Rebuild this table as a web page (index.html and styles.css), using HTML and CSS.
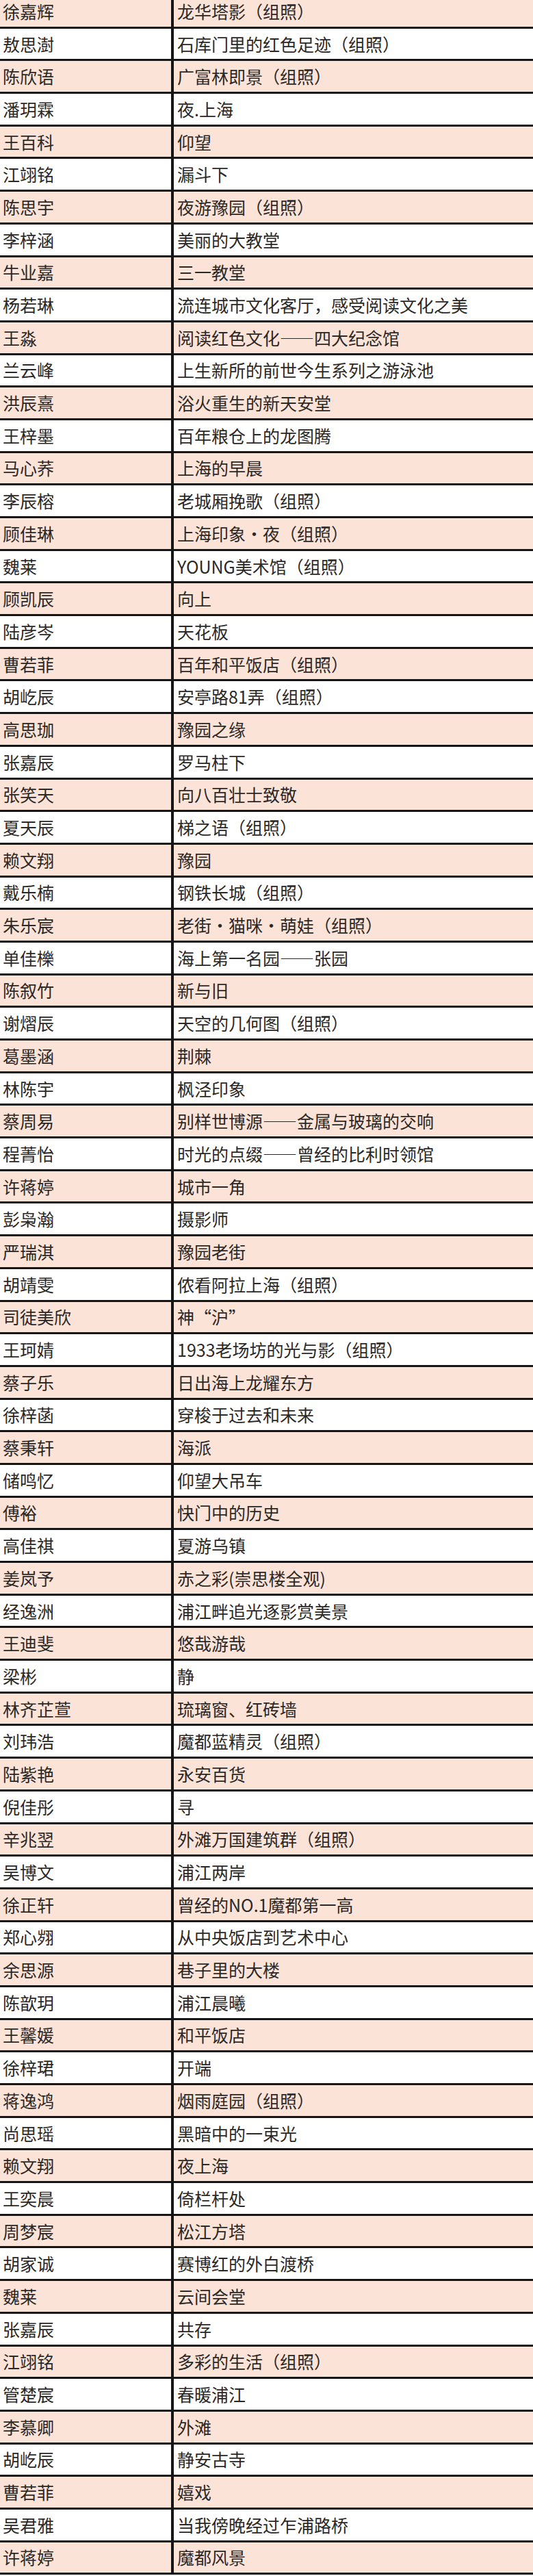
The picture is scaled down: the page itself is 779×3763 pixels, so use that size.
FILE: index.html
```html
<!DOCTYPE html>
<html lang="zh-CN">
<head>
<meta charset="utf-8">
<title>摄影作品名单</title>
<link rel="stylesheet" href="styles.css">
</head>
<body>
<div class="sheet">
<div class="row pink"><div class="name">徐嘉辉</div><div class="title">龙华塔影（组照）</div></div>
<div class="row"><div class="name">敖思澍</div><div class="title">石库门里的红色足迹（组照）</div></div>
<div class="row pink"><div class="name">陈欣语</div><div class="title">广富林即景（组照）</div></div>
<div class="row"><div class="name">潘玥霖</div><div class="title">夜.上海</div></div>
<div class="row pink"><div class="name">王百科</div><div class="title">仰望</div></div>
<div class="row"><div class="name">江翊铭</div><div class="title">漏斗下</div></div>
<div class="row pink"><div class="name">陈思宇</div><div class="title">夜游豫园（组照）</div></div>
<div class="row"><div class="name">李梓涵</div><div class="title">美丽的大教堂</div></div>
<div class="row pink"><div class="name">牛业嘉</div><div class="title">三一教堂</div></div>
<div class="row"><div class="name">杨若琳</div><div class="title">流连城市文化客厅，感受阅读文化之美</div></div>
<div class="row pink"><div class="name">王淼</div><div class="title">阅读红色文化——四大纪念馆</div></div>
<div class="row"><div class="name">兰云峰</div><div class="title">上生新所的前世今生系列之游泳池</div></div>
<div class="row pink"><div class="name">洪辰熹</div><div class="title">浴火重生的新天安堂</div></div>
<div class="row"><div class="name">王梓墨</div><div class="title">百年粮仓上的龙图腾</div></div>
<div class="row pink"><div class="name">马心荞</div><div class="title">上海的早晨</div></div>
<div class="row"><div class="name">李辰榕</div><div class="title">老城厢挽歌（组照）</div></div>
<div class="row pink"><div class="name">顾佳琳</div><div class="title">上海印象·夜（组照）</div></div>
<div class="row"><div class="name">魏莱</div><div class="title">YOUNG美术馆（组照）</div></div>
<div class="row pink"><div class="name">顾凯辰</div><div class="title">向上</div></div>
<div class="row"><div class="name">陆彦岑</div><div class="title">天花板</div></div>
<div class="row pink"><div class="name">曹若菲</div><div class="title">百年和平饭店（组照）</div></div>
<div class="row"><div class="name">胡屹辰</div><div class="title">安亭路81弄（组照）</div></div>
<div class="row pink"><div class="name">高思珈</div><div class="title">豫园之缘</div></div>
<div class="row"><div class="name">张嘉辰</div><div class="title">罗马柱下</div></div>
<div class="row pink"><div class="name">张笑天</div><div class="title">向八百壮士致敬</div></div>
<div class="row"><div class="name">夏天辰</div><div class="title">梯之语（组照）</div></div>
<div class="row pink"><div class="name">赖文翔</div><div class="title">豫园</div></div>
<div class="row"><div class="name">戴乐楠</div><div class="title">钢铁长城（组照）</div></div>
<div class="row pink"><div class="name">朱乐宸</div><div class="title">老街·猫咪·萌娃（组照）</div></div>
<div class="row"><div class="name">单佳櫟</div><div class="title">海上第一名园——张园</div></div>
<div class="row pink"><div class="name">陈叙竹</div><div class="title">新与旧</div></div>
<div class="row"><div class="name">谢熠辰</div><div class="title">天空的几何图（组照）</div></div>
<div class="row pink"><div class="name">葛墨涵</div><div class="title">荆棘</div></div>
<div class="row"><div class="name">林陈宇</div><div class="title">枫泾印象</div></div>
<div class="row pink"><div class="name">蔡周易</div><div class="title">别样世博源——金属与玻璃的交响</div></div>
<div class="row"><div class="name">程菁怡</div><div class="title">时光的点缀——曾经的比利时领馆</div></div>
<div class="row pink"><div class="name">许蒋婷</div><div class="title">城市一角</div></div>
<div class="row"><div class="name">彭枭瀚</div><div class="title">摄影师</div></div>
<div class="row pink"><div class="name">严瑞淇</div><div class="title">豫园老街</div></div>
<div class="row"><div class="name">胡靖雯</div><div class="title">侬看阿拉上海（组照）</div></div>
<div class="row pink"><div class="name">司徒美欣</div><div class="title">神“沪”</div></div>
<div class="row"><div class="name">王珂婧</div><div class="title">1933老场坊的光与影（组照）</div></div>
<div class="row pink"><div class="name">蔡子乐</div><div class="title">日出海上龙耀东方</div></div>
<div class="row"><div class="name">徐梓菡</div><div class="title">穿梭于过去和未来</div></div>
<div class="row pink"><div class="name">蔡秉轩</div><div class="title">海派</div></div>
<div class="row"><div class="name">储鸣忆</div><div class="title">仰望大吊车</div></div>
<div class="row pink"><div class="name">傅裕</div><div class="title">快门中的历史</div></div>
<div class="row"><div class="name">高佳祺</div><div class="title">夏游乌镇</div></div>
<div class="row pink"><div class="name">姜岚予</div><div class="title">赤之彩(崇思楼全观)</div></div>
<div class="row"><div class="name">经逸洲</div><div class="title">浦江畔追光逐影赏美景</div></div>
<div class="row pink"><div class="name">王迪斐</div><div class="title">悠哉游哉</div></div>
<div class="row"><div class="name">梁彬</div><div class="title">静</div></div>
<div class="row pink"><div class="name">林齐芷萱</div><div class="title">琉璃窗、红砖墙</div></div>
<div class="row"><div class="name">刘玮浩</div><div class="title">魔都蓝精灵（组照）</div></div>
<div class="row pink"><div class="name">陆紫艳</div><div class="title">永安百货</div></div>
<div class="row"><div class="name">倪佳彤</div><div class="title">寻</div></div>
<div class="row pink"><div class="name">辛兆翌</div><div class="title">外滩万国建筑群（组照）</div></div>
<div class="row"><div class="name">吴博文</div><div class="title">浦江两岸</div></div>
<div class="row pink"><div class="name">徐正轩</div><div class="title">曾经的NO.1魔都第一高</div></div>
<div class="row"><div class="name">郑心翙</div><div class="title">从中央饭店到艺术中心</div></div>
<div class="row pink"><div class="name">余思源</div><div class="title">巷子里的大楼</div></div>
<div class="row"><div class="name">陈歆玥</div><div class="title">浦江晨曦</div></div>
<div class="row pink"><div class="name">王馨媛</div><div class="title">和平饭店</div></div>
<div class="row"><div class="name">徐梓珺</div><div class="title">开端</div></div>
<div class="row pink"><div class="name">蒋逸鸿</div><div class="title">烟雨庭园（组照）</div></div>
<div class="row"><div class="name">尚思瑶</div><div class="title">黑暗中的一束光</div></div>
<div class="row pink"><div class="name">赖文翔</div><div class="title">夜上海</div></div>
<div class="row"><div class="name">王奕晨</div><div class="title">倚栏杆处</div></div>
<div class="row pink"><div class="name">周梦宸</div><div class="title">松江方塔</div></div>
<div class="row"><div class="name">胡家诚</div><div class="title">赛博红的外白渡桥</div></div>
<div class="row pink"><div class="name">魏莱</div><div class="title">云间会堂</div></div>
<div class="row"><div class="name">张嘉辰</div><div class="title">共存</div></div>
<div class="row pink"><div class="name">江翊铭</div><div class="title">多彩的生活（组照）</div></div>
<div class="row"><div class="name">管楚宸</div><div class="title">春暖浦江</div></div>
<div class="row pink"><div class="name">李慕卿</div><div class="title">外滩</div></div>
<div class="row"><div class="name">胡屹辰</div><div class="title">静安古寺</div></div>
<div class="row pink"><div class="name">曹若菲</div><div class="title">嬉戏</div></div>
<div class="row"><div class="name">吴君雅</div><div class="title">当我傍晚经过乍浦路桥</div></div>
<div class="row pink"><div class="name">许蒋婷</div><div class="title">魔都风景</div></div>
</div>
</body>
</html>
```

FILE: styles.css
```css
html, body {
  margin: 0;
  padding: 0;
  background: #ffffff;
}

body {
  font-family: "Noto Sans CJK SC", "Noto Sans", sans-serif;
  color: #2b2826;
  overflow: hidden;
}

.sheet {
  display: flex;
  flex-direction: column;
  margin-top: -6px;
}

.row {
  display: flex;
  height: 47.7px;
  box-sizing: border-box;
  border-bottom: 3px solid #151515;
  background: #ffffff;
}

.row.pink {
  background: #fbe3d8;
}

.name,
.title {
  display: flex;
  align-items: center;
  font-size: 25px;
  line-height: 1;
  white-space: nowrap;
}

.name {
  flex: 0 0 254px;
  box-sizing: border-box;
  padding-left: 4px;
  border-right: 4px solid #151515;
}

.title {
  flex: 1 1 auto;
  padding-left: 5px;
}
```
